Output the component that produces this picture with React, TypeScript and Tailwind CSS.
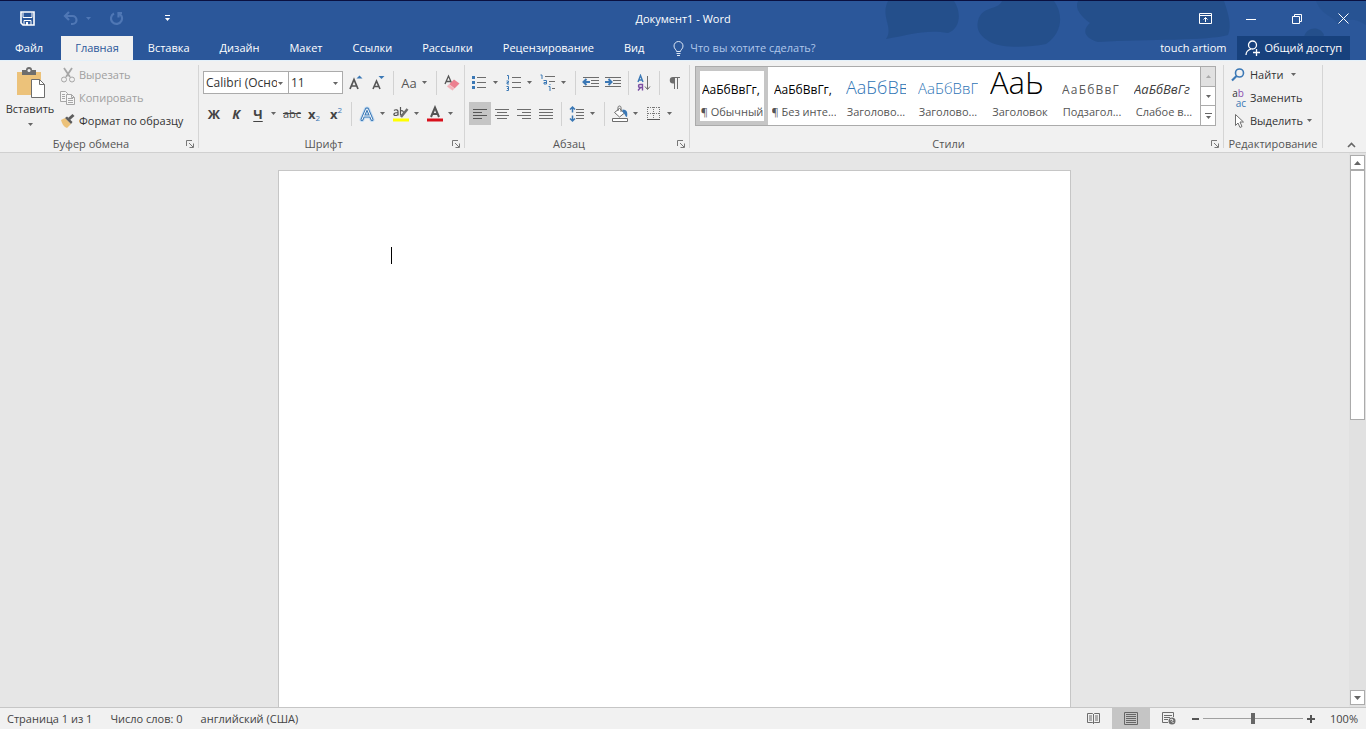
import React from 'react';
import { clsx } from 'clsx';

const TABS = ['Файл', 'Главная', 'Вставка', 'Дизайн', 'Макет', 'Ссылки', 'Рассылки', 'Рецензирование', 'Вид'];

const STYLES = [
  { name: '¶ Обычный', sample: 'АаБбВвГг,', className: 'text-[12px] text-black' },
  { name: '¶ Без инте...', sample: 'АаБбВвГг,', className: 'text-[12px] text-black' },
  { name: 'Заголово...', sample: 'АаБбВвГ', className: 'text-[18px] font-light text-[#2e74b5]' },
  { name: 'Заголово...', sample: 'АаБбВвГ', className: 'text-[15px] font-light text-[#2e74b5]' },
  { name: 'Заголовок', sample: 'АаЬ', className: 'text-[31px] font-light text-black' },
  { name: 'Подзагол...', sample: 'АаБбВвГ', className: 'text-[12px] tracking-widest text-[#5a5a5a]' },
  { name: 'Слабое в...', sample: 'АаБбВвГг', className: 'text-[13px] italic text-[#404040]' },
];

const Icon: React.FC<{ w?: number; h?: number; className?: string; children: React.ReactNode }> = ({
  w = 18,
  h = 18,
  className,
  children,
}) => (
  <svg width={w} height={h} viewBox={`0 0 ${w} ${h}`} fill="none" className={clsx('shrink-0', className)} aria-hidden="true">
    {children}
  </svg>
);

const Caret: React.FC<{ className?: string }> = ({ className }) => (
  <Icon w={5} h={3} className={className}>
    <path d="M0 0h5L2.5 3z" fill="currentColor" />
  </Icon>
);

const ToolButton: React.FC<{ label: string; active?: boolean; children: React.ReactNode }> = ({ label, active, children }) => (
  <button
    type="button"
    aria-label={label}
    title={label}
    className={clsx('flex h-[23px] w-[22px] shrink-0 items-center justify-center', active && 'bg-[#c5c5c5]')}
  >
    {children}
  </button>
);

const DropButton: React.FC<{ label: string }> = ({ label }) => (
  <button type="button" aria-label={label} className="flex h-[23px] w-3 shrink-0 items-center pl-[2px] text-[#666]">
    <Caret />
  </button>
);

const Divider = () => <div className="mx-1 h-6 w-px shrink-0 bg-[#d2d2d2]" />;

const Group: React.FC<{ title: string; launcher?: boolean; className?: string; children: React.ReactNode }> = ({
  title,
  launcher = true,
  className,
  children,
}) => (
  <section aria-label={title} className={clsx('flex flex-col', className)}>
    <div className="flex-1">{children}</div>
    <div className="flex h-4 items-center text-[#555]">
      <span className="flex-1 text-center">{title}</span>
      {launcher && (
        <button type="button" aria-label={`Параметры: ${title}`} className="flex w-4 justify-center">
          <Icon w={8} h={8}>
            <path d="M.5 6V.5H6M3 3l4 4M7.5 3.500v4h-4" stroke="#777" />
          </Icon>
        </button>
      )}
    </div>
  </section>
);

const GroupLine = () => <div className="my-1 w-px shrink-0 bg-[#d5d5d5]" />;

const TitleBar = () => (
  <div className="flex h-[35px] items-center">
    <div className="flex flex-1 items-center">
      <button type="button" aria-label="Сохранить" className="ml-5 mr-7">
        <Icon w={15} h={15}>
          <path d="M1 1h13v13H3l-2-2z" stroke="#fff" strokeWidth="1.6" />
          <path d="M3 1.500v5h9v-5" stroke="#fff" />
          <path d="M4 14V9.500h7V14" stroke="#fff" />
          <path d="M6 11h2v3H6z" fill="#fff" />
        </Icon>
      </button>
      <button type="button" aria-label="Отменить" className="mr-2">
        <Icon w={15} h={15}>
          <path d="M6 1L2 5l4 4M2 5h7.500a4 4 0 010 8H8" stroke="#4f77b5" strokeWidth="2.200" />
        </Icon>
      </button>
      <button type="button" aria-label="Список отмены" className="mr-[19px] text-[#4f77b5]">
        <Caret />
      </button>
      <button type="button" aria-label="Повторить" className="mr-10">
        <Icon w={14} h={15}>
          <path d="M4 2.500A5.500 5.500 0 107.500 2H12M8.500 1v5.500" stroke="#4f77b5" strokeWidth="2.200" />
        </Icon>
      </button>
      <button type="button" aria-label="Настройка панели быстрого доступа">
        <Icon w={7} h={7}>
          <path d="M1 .5h5" stroke="#fff" />
          <path d="M1 3h5L3.500 6z" fill="#fff" />
        </Icon>
      </button>
    </div>
    <h1>Документ1 - Word</h1>
    <div className="flex flex-1 justify-end">
      <button type="button" aria-label="Параметры отображения ленты" className="flex h-8 w-[46px] items-center justify-center">
        <Icon w={13} h={11}>
          <path d="M.5.5h12v10H.5zM.5 2.500h12M6.500 9V4.500M4.500 6.500l2-2 2 2" stroke="#fff" />
        </Icon>
      </button>
      <button type="button" aria-label="Свернуть" className="flex h-8 w-[46px] items-center justify-center">
        <Icon w={10} h={2}>
          <path d="M0 1.500h10" stroke="#fff" />
        </Icon>
      </button>
      <button type="button" aria-label="Свернуть в окно" className="flex h-8 w-[46px] items-center justify-center">
        <Icon w={10} h={10}>
          <path d="M.5 2.500h7v7h-7zM2.500 2.500v-2h7v7h-2" stroke="#fff" />
        </Icon>
      </button>
      <button type="button" aria-label="Закрыть" className="flex h-8 w-[46px] items-center justify-center">
        <Icon w={11} h={11}>
          <path d="M.5.5l10 10M10.500.5l-10 10" stroke="#fff" />
        </Icon>
      </button>
    </div>
  </div>
);

const TabRow = () => (
  <div className="flex h-6 items-stretch">
    <nav className="flex">
      {TABS.map(tab => (
        <button
          key={tab}
          type="button"
          className={clsx(
            tab === 'Главная' ? 'ml-[3px] bg-[#f1f1f1] px-[14px] text-[#2b579a]' : 'px-[15px]',
          )}
        >
          {tab}
        </button>
      ))}
    </nav>
    <label className="flex flex-1 items-center gap-[6px] pl-[14px]">
      <Icon w={11} h={15}>
        <path d="M3.500 10.500C3.500 8.500 1 8 1 5a4.500 4.500 0 019 0c0 3-2.500 3.500-2.500 5.500zM3.500 12.500h4M4 14.500h3" stroke="#dbe6f5" />
      </Icon>
      <input
        type="text"
        aria-label="Помощник"
        placeholder="Что вы хотите сделать?"
        className="flex-1 bg-transparent outline-none placeholder:text-[#b1c8ea]"
      />
    </label>
    <button type="button" className="px-[11px]">touch artiom</button>
    <button type="button" className="mr-4 flex items-center gap-1 bg-[#17417d] px-2">
      <Icon w={15} h={16}>
        <circle cx="7.500" cy="5" r="4" stroke="#fff" strokeWidth="1.300" />
        <path d="M1 15c0-3 2-5 5-6M8 12.500h7M11.500 9v7" stroke="#fff" strokeWidth="1.300" />
      </Icon>
      Общий доступ
    </button>
  </div>
);

const ClipboardGroup = () => (
  <Group title="Буфер обмена" className="w-[198px]">
    <div className="flex pt-[2px]">
      <button type="button" className="flex w-[60px] flex-col items-center pt-1">
        <Icon w={30} h={32}>
          <path d="M2 5h24v23H2z" fill="#ecc27a" />
          <path d="M7 3h4a3 3 0 016 0h4v5H7z" fill="#6d6d6d" />
          <circle cx="14" cy="3.500" r="1.500" fill="#f1f1f1" />
          <path d="M16.500 12.500h8l5 5v13h-13z" fill="#fff" stroke="#6d6d6d" />
          <path d="M24.500 12.500v5h5" stroke="#6d6d6d" />
        </Icon>
        <span className="mt-[2px]">Вставить</span>
        <Caret className="mt-[6px] text-[#666]" />
      </button>
      <div className="flex flex-col">
        <button type="button" className="flex h-[23px] items-center gap-[3px] text-[#a0a0a0]">
          <Icon w={16} h={16}>
            <path d="M4 1l6 9M12 1l-6 9" stroke="#a6a6a6" strokeWidth="1.800" />
            <circle cx="4" cy="12.500" r="2.500" stroke="#a6a6a6" />
            <circle cx="12" cy="12.500" r="2.500" stroke="#a6a6a6" />
          </Icon>
          Вырезать
        </button>
        <button type="button" className="flex h-[23px] items-center gap-[3px] text-[#a0a0a0]">
          <Icon w={16} h={16}>
            <path d="M.5 1.500h5l2 2v8h-7z" fill="#f6f6f6" stroke="#a6a6a6" />
            <path d="M6.500 4.500h5l3 3v7h-8z" fill="#f6f6f6" stroke="#a6a6a6" />
            <path d="M2 4.500h3M2 6.500h3M2 8.500h3M8 8.500h5M8 10.500h5M8 12.500h5M11.500 4.500v3h3" stroke="#a6a6a6" />
          </Icon>
          Копировать
        </button>
        <button type="button" className="flex h-[23px] items-center gap-[3px]">
          <Icon w={16} h={16}>
            <path d="M1 7l4-2 6 6-4 4c-3-1-5-4-6-8z" fill="#ecc27a" />
            <path d="M5 5l2-1.500 5.500 5.500L11 11z" fill="#5c5c5c" />
            <path d="M9 6l4.500-4" stroke="#5c5c5c" strokeWidth="3" />
          </Icon>
          Формат по образцу
        </button>
      </div>
    </div>
  </Group>
);

const FontGroup = () => (
  <Group title="Шрифт" className="w-[265px]">
    <div className="flex flex-col gap-2 pl-1 pt-[10px]">
      <div className="flex h-[23px] items-center">
        <div className="relative h-[23px] w-[86px] border border-[#ababab] bg-white">
          <select aria-label="Шрифт" className="h-full w-full appearance-none overflow-hidden pl-[2px] pr-[11px] text-[12px] outline-none">
            <option>Calibri (Основной текст)</option>
          </select>
          <Caret className="pointer-events-none absolute right-[5px] top-[10px] text-[#666]" />
        </div>
        <div className="relative -ml-px h-[23px] w-[55px] border border-[#ababab] bg-white">
          <select aria-label="Размер шрифта" className="h-full w-full appearance-none pl-[2px] text-[12px] outline-none">
            <option>11</option>
          </select>
          <Caret className="pointer-events-none absolute right-[4px] top-[10px] text-[#666]" />
        </div>
        <div className="ml-[2px] flex items-center">
          <ToolButton label="Увеличить размер шрифта">
            <Icon>
              <path d="M3 15L7 5.500 11 15M4.500 12h5" stroke="#555" strokeWidth="1.700" />
              <path d="M9.500 4.500h6l-3-3z" fill="#3b78b5" />
            </Icon>
          </ToolButton>
          <ToolButton label="Уменьшить размер шрифта">
            <Icon>
              <path d="M4 15L7.500 7 11 15M5.500 12.500h4" stroke="#555" strokeWidth="1.600" />
              <path d="M9.500 2h6l-3 3z" fill="#3b78b5" />
            </Icon>
          </ToolButton>
          <Divider />
          <ToolButton label="Регистр">
            <span className="text-[13px] text-[#555]">Aa</span>
          </ToolButton>
          <DropButton label="Варианты регистра" />
          <Divider />
          <ToolButton label="Удалить все форматирование">
            <Icon>
              <path d="M2 10L5.500 2 9 10M3.500 7.500h4" stroke="#555" strokeWidth="1.300" />
              <path d="M4 12.500l7-7 5.500 4-7 7z" fill="#ec8090" />
              <path d="M4 12.500l2-2 5.500 4-2 2z" fill="#f4b0b8" stroke="#f1f1f1" strokeWidth=".5" />
            </Icon>
          </ToolButton>
        </div>
      </div>
      <div className="flex h-[23px] items-center text-[13px] text-[#444]">
        <ToolButton label="Полужирный"><b>Ж</b></ToolButton>
        <ToolButton label="Курсив"><b className="italic">К</b></ToolButton>
        <ToolButton label="Подчеркнутый"><b className="underline underline-offset-2">Ч</b></ToolButton>
        <DropButton label="Вид подчеркивания" />
        <ToolButton label="Зачеркнутый"><span className="text-[11px] line-through">abc</span></ToolButton>
        <ToolButton label="Подстрочный знак">
          <b>x</b><span className="pt-2 text-[8px] text-[#3b78b5]">2</span>
        </ToolButton>
        <ToolButton label="Надстрочный знак">
          <b>x</b><span className="pb-2 text-[8px] text-[#3b78b5]">2</span>
        </ToolButton>
        <Divider />
        <ToolButton label="Текстовые эффекты">
          <Icon>
            <g strokeLinejoin="round" strokeLinecap="round">
              <path d="M4 14.500L8.500 4h1L14 14.500M6 11h6" stroke="#c3dcf3" strokeWidth="5" />
              <path d="M4 14.500L8.500 4h1L14 14.500M6 11h6" stroke="#3b78b5" strokeWidth="3" />
              <path d="M4 14.500L8.500 4h1L14 14.500M6 11h6" stroke="#fff" strokeWidth="1" />
            </g>
          </Icon>
        </ToolButton>
        <DropButton label="Варианты эффектов" />
        <ToolButton label="Цвет выделения текста">
          <Icon>
            <path d="M1 13.500h16v3H1z" fill="#ff0" />
            <path d="M2 5.500c2-1.500 4-.5 4 1v4M6 7.500c-5 0-5 3-2.500 3 1.500 0 2.500-1 2.500-1.500M8.500 2v8.500M8.500 6c4-2 4 5 0 4" stroke="#555" strokeWidth="1.200" />
            <path d="M9 12l6.500-8" stroke="#6d6d6d" strokeWidth="2.500" />
          </Icon>
        </ToolButton>
        <DropButton label="Выбор цвета выделения" />
        <ToolButton label="Цвет текста">
          <Icon>
            <path d="M1 13.500h16v3H1z" fill="#d8101c" />
            <path d="M5 12L9 2.500 13 12M6.500 9h5" stroke="#555" strokeWidth="2" />
          </Icon>
        </ToolButton>
        <DropButton label="Выбор цвета текста" />
      </div>
    </div>
  </Group>
);

const ParagraphGroup = () => (
  <Group title="Абзац" className="w-[224px]">
    <div className="flex flex-col gap-2 pl-1 pt-[10px]">
      <div className="flex h-[23px] items-center">
        <ToolButton label="Маркеры">
          <Icon>
            <path d="M6 3.500h9M6 8.500h9M6 13.500h9" stroke="#6d6d6d" />
            <path d="M1 2h3v3H1zM1 7h3v3H1zM1 12h3v3H1z" fill="#3b78b5" />
          </Icon>
        </ToolButton>
        <DropButton label="Библиотека маркеров" />
        <ToolButton label="Нумерация">
          <Icon>
            <path d="M7 3.500h9M7 8.500h9M7 13.500h9" stroke="#6d6d6d" />
            <path d="M2 1.500h1.500v4M1.500 7h2v1.500h-1.500v1.500h2M1.500 12.500h2v4h-2M2 14.500h1.500" stroke="#3b78b5" />
          </Icon>
        </ToolButton>
        <DropButton label="Библиотека нумерации" />
        <ToolButton label="Многоуровневый список">
          <Icon>
            <path d="M6 2.500h10M10 7.500h6M13 14.500h3" stroke="#6d6d6d" />
            <path d="M1.500 1H3v4M4.500 6.500h3v3.500H5V8.500h2.500M9.500 12.500H11V17M10.500 10.500h1" stroke="#3b78b5" />
          </Icon>
        </ToolButton>
        <DropButton label="Библиотека списков" />
        <Divider />
        <ToolButton label="Уменьшить отступ">
          <Icon>
            <path d="M1 3.500h16M9 6.500h8M9 9.500h8M1 12.500h16" stroke="#6d6d6d" />
            <path d="M8 8H2M4.500 5L1.500 8l3 3" stroke="#3b78b5" strokeWidth="2" />
          </Icon>
        </ToolButton>
        <ToolButton label="Увеличить отступ">
          <Icon>
            <path d="M1 3.500h16M9 6.500h8M9 9.500h8M1 12.500h16" stroke="#6d6d6d" />
            <path d="M1 8h6M4.500 5l3 3-3 3" stroke="#3b78b5" strokeWidth="2" />
          </Icon>
        </ToolButton>
        <Divider />
        <ToolButton label="Сортировка">
          <Icon w={16}>
            <path d="M2 8l2.500-6.500L7 8M3 6h3" stroke="#3b78b5" strokeWidth="1.400" />
            <path d="M6.500 16.500v-6H4c-2 0-2 3 0 3h2.500M4.500 13.500l-2.500 3" stroke="#7b4fa3" strokeWidth="1.400" />
            <path d="M11.500 2v13M9 12.500l2.500 3 2.500-3" stroke="#6d6d6d" />
          </Icon>
        </ToolButton>
        <Divider />
        <ToolButton label="Отобразить все знаки">
          <Icon w={12} h={14}>
            <path d="M5.500 1v12M8.500 1v12M4 1.500h7" stroke="#6d6d6d" />
            <path d="M5.500 1H4a3.200 3.200 0 000 6.500h1.500z" fill="#6d6d6d" />
          </Icon>
        </ToolButton>
      </div>
      <div className="flex h-[23px] items-center">
        <ToolButton label="По левому краю" active>
          <Icon><path d="M2 4.500h14M2 7.500h9M2 10.500h14M2 13.500h9" stroke="#555" /></Icon>
        </ToolButton>
        <ToolButton label="По центру">
          <Icon><path d="M2 4.500h14M4 7.500h10M2 10.500h14M4 13.500h10" stroke="#6d6d6d" /></Icon>
        </ToolButton>
        <ToolButton label="По правому краю">
          <Icon><path d="M2 4.500h14M7 7.500h9M2 10.500h14M7 13.500h9" stroke="#6d6d6d" /></Icon>
        </ToolButton>
        <ToolButton label="По ширине">
          <Icon><path d="M2 4.500h14M2 7.500h14M2 10.500h14M2 13.500h14" stroke="#6d6d6d" /></Icon>
        </ToolButton>
        <Divider />
        <ToolButton label="Интервал">
          <Icon w={16}>
            <path d="M7 4.500h8M7 7.500h8M7 10.500h8M7 13.500h8" stroke="#6d6d6d" />
            <path d="M3.500 2v5.500M1 4.500L3.500 2 6 4.500M3.500 10.500V16M1 13.500L3.500 16 6 13.500" stroke="#3b78b5" strokeWidth="1.500" />
          </Icon>
        </ToolButton>
        <DropButton label="Варианты интервала" />
        <Divider />
        <ToolButton label="Заливка">
          <Icon>
            <path d="M1.500 13.500h15v3h-15z" fill="#fff" stroke="#6d6d6d" />
            <path d="M3.500 7.500l5-4 5 4.500-5 4z" fill="#fff" stroke="#6d6d6d" />
            <path d="M7 6V2.500c0-2 3-2 3 0V7" stroke="#6d6d6d" />
            <path d="M11.500 4.500c4.500 0 5.500 3 4.500 7.500-2 0-1.500-3-4.500-5z" fill="#3b78b5" />
          </Icon>
        </ToolButton>
        <DropButton label="Выбор заливки" />
        <ToolButton label="Границы">
          <Icon w={14} h={14}>
            <path d="M1 .5h12M1 6.500h12M.5 0v12M6.500 0v12M12.500 0v12" stroke="#777" strokeDasharray="1 1" />
            <path d="M0 12.500h13" stroke="#555" />
          </Icon>
        </ToolButton>
        <DropButton label="Выбор границ" />
      </div>
    </div>
  </Group>
);

const StylesGroup = () => (
  <Group title="Стили" className="flex-1">
    <div className="pl-[5px] pr-[7px] pt-[5px]">
      <div className="flex h-[60px] border border-[#ababab] bg-white">
        <div className="grid flex-1 grid-cols-7">
          {STYLES.map((style, i) => (
            <button
              key={i}
              type="button"
              className={clsx('flex flex-col overflow-hidden border-4', i === 0 ? 'border-[#c6c6c6]' : 'border-transparent')}
            >
              {/* the empty box sets one baseline for samples of every size */}
              <span
                className={clsx(
                  "mx-[2px] flex h-[34px] items-baseline self-stretch overflow-hidden whitespace-nowrap leading-[22px] before:h-[23px] before:w-0 before:content-['']",
                  style.className,
                )}
              >
                {style.sample}
              </span>
              <span className="self-center whitespace-nowrap leading-[14px] text-[#555]">{style.name}</span>
            </button>
          ))}
        </div>
        <div className="flex w-[15px] flex-col divide-y divide-[#ababab] border-l border-[#ababab] text-[#666]">
          <button type="button" aria-label="Предыдущая строка" className="flex flex-1 items-center justify-center bg-[#e1e1e1] text-[#aaa]">
            <Caret className="rotate-180" />
          </button>
          <button type="button" aria-label="Следующая строка" className="flex flex-1 items-center justify-center">
            <Caret />
          </button>
          <button type="button" aria-label="Дополнительные параметры" className="flex flex-1 items-center justify-center">
            <Icon w={7} h={6}>
              <path d="M0 .5h7" stroke="currentColor" />
              <path d="M1 3h5L3.500 6z" fill="currentColor" />
            </Icon>
          </button>
        </div>
      </div>
    </div>
  </Group>
);

const EditingGroup = () => (
  <Group title="Редактирование" launcher={false} className="w-[98px]">
    <div className="flex flex-col pl-[6px] pt-[2px]">
      <button type="button" className="flex h-[23px] items-center gap-1">
        <Icon w={16} h={16}>
          <circle cx="9.500" cy="6" r="4" stroke="#3b78b5" strokeWidth="1.600" />
          <path d="M6.500 9L2 13.500" stroke="#3b78b5" strokeWidth="2.200" />
        </Icon>
        Найти
        <Caret className="ml-1 text-[#666]" />
      </button>
      <button type="button" className="flex h-[23px] items-center gap-1">
        <span className="flex w-4 flex-col text-[10px] leading-[10px]">
          <span>a<span className="text-[#8a4fb0]">b</span></span>
          <span className="self-end text-[#3b78b5]">ac</span>
        </span>
        Заменить
      </button>
      <button type="button" className="flex h-[23px] items-center gap-1">
        <Icon w={16} h={16}>
          <path d="M5.500 1.500v11l2.500-2.500 2 4.500 2-1-2-4.500h3.500z" fill="#fff" stroke="#6d6d6d" />
        </Icon>
        Выделить
        <Caret className="text-[#666]" />
      </button>
    </div>
  </Group>
);

const ScrollBar = () => (
  <div className="flex w-[17px] flex-col items-center bg-[#e1e1e1] py-[2px]">
    <button type="button" aria-label="Вверх" className="flex h-[15px] w-[15px] items-center justify-center border border-[#ababab] bg-white">
      <Icon w={7} h={4}><path d="M0 4h7L3.500 0z" fill="#666" /></Icon>
    </button>
    <div className="w-[15px] flex-1">
      <div className="h-[48%] border border-[#ababab] bg-white" />
    </div>
    <button type="button" aria-label="Вниз" className="flex h-[15px] w-[15px] items-center justify-center border border-[#ababab] bg-white">
      <Icon w={7} h={4}><path d="M0 0h7L3.500 4z" fill="#666" /></Icon>
    </button>
  </div>
);

const StatusBar = () => (
  <footer className="flex h-[22px] shrink-0 items-stretch border-t border-[#c6c6c6] bg-[#f1f1f1] text-[#444]">
    <div className="flex flex-1 items-center gap-[18px] pl-[7px]">
      <button type="button">Страница 1 из 1</button>
      <button type="button">Число слов: 0</button>
      <button type="button">английский (США)</button>
    </div>
    <button type="button" aria-label="Режим чтения" className="flex w-[38px] items-center justify-center">
      <Icon w={13} h={13}>
        <path d="M.5 1.500h5l1 1 1-1h5v9h-5l-1 1-1-1h-5zM6.500 2v10M2 4h3M2 6h3M2 8h3M8 4h3M8 6h3M8 8h3" stroke="#6d6d6d" />
      </Icon>
    </button>
    <button type="button" aria-label="Разметка страницы" className="flex w-[38px] items-center justify-center bg-[#c5c5c5]">
      <Icon w={14} h={13}>
        <path d="M.5.5h13v12H.5zM2 2.500h10M2 4.500h10M2 6.500h10M2 8.500h10M2 10.500h10" stroke="#666" />
      </Icon>
    </button>
    <button type="button" aria-label="Веб-документ" className="flex w-[38px] items-center justify-center">
      <Icon w={14} h={13}>
        <path d="M6 10.500H.5V.5h11V5M2 3.500h8M2 5.500h6M2 7.500h4" stroke="#6d6d6d" />
        <circle cx="10" cy="9" r="3.500" fill="#6d6d6d" />
        <path d="M8 8l2-1 1 1.500-1.500 1M10.500 11l1-1" stroke="#f1f1f1" />
      </Icon>
    </button>
    <div className="flex items-center pl-1">
      <button type="button" aria-label="Уменьшить масштаб">
        <Icon w={7} h={8}><path d="M0 4h7" stroke="#555" strokeWidth="2" /></Icon>
      </button>
      <input
        type="range"
        min={0}
        max={100}
        defaultValue={50}
        aria-label="Масштаб"
        className="mx-1 h-[11px] w-[100px] appearance-none bg-transparent bg-[linear-gradient(#a0a0a0,#a0a0a0)] bg-[length:100%_1px] bg-center bg-no-repeat [&::-webkit-slider-thumb]:h-[11px] [&::-webkit-slider-thumb]:w-1 [&::-webkit-slider-thumb]:appearance-none [&::-webkit-slider-thumb]:bg-[#666]"
      />
      <button type="button" aria-label="Увеличить масштаб">
        <Icon w={8} h={8}><path d="M0 4h8M4 0v8" stroke="#555" strokeWidth="2" /></Icon>
      </button>
      <button type="button" className="w-[51px] pr-2 text-right">100%</button>
    </div>
  </footer>
);

export default function App() {
  return (
    <div className="flex h-screen flex-col overflow-hidden font-['Open_Sans','Noto_Sans',sans-serif] text-[11px] leading-4 text-[#333]">
      <header className="relative border-t border-[#0a1040] bg-[#2b579a] text-white">
        {/* Dark cloud pattern behind the window buttons */}
        <svg className="absolute right-0 top-0 h-full w-[500px]" viewBox="0 0 500 59" aria-hidden="true">
          <g fill="#204a82" opacity=".6">
            <path d="M22 0h66c8 12 6 28-6 32-22-4-40 2-62 6 8-12-6-22 2-38z" />
            <path d="M112 20c4-16 20-10 24-20h52c10 14 8 32-8 43-20 4-44 4-56-2-10-6-14-12-12-21z" />
            <path d="M212 0h146c4 12 8 24 4 34-20 6-80 4-130 7-14-4-16-12-8-19-8-6-16-14-12-22z" />
            <path d="M438 36c2-10 16-12 20-2l-4 6h-16z" />
            <path d="M450 0h50v24c-12-8-20-6-28 0-4-10-16-8-22-24z" opacity=".4" />
          </g>
        </svg>
        <div className="relative">
          <TitleBar />
          <TabRow />
        </div>
      </header>

      <div className="flex h-[93px] shrink-0 border-b border-t border-b-[#d0d0d0] border-t-[#e4f1fa] bg-[#f1f1f1]">
        <ClipboardGroup />
        <GroupLine />
        <FontGroup />
        <GroupLine />
        <ParagraphGroup />
        <GroupLine />
        <StylesGroup />
        <GroupLine />
        <EditingGroup />
        <GroupLine />
        <div className="flex w-[43px] items-end justify-end pb-1 pr-[10px]">
          <button type="button" aria-label="Свернуть ленту">
            <Icon w={9} h={6}><path d="M1 5l3.500-3.500L8 5" stroke="#666" strokeWidth="1.600" /></Icon>
          </button>
        </div>
      </div>

      <main className="flex min-h-0 flex-1 bg-[#e6e6e6]">
        <div className="flex flex-1 justify-center overflow-hidden pt-[17px]">
          <div className="w-[793px] border border-b-0 border-[#c6c6c6] bg-white pl-28 pt-[76px]">
            <div className="h-[17px] w-px bg-black" />
          </div>
        </div>
        <ScrollBar />
      </main>

      <StatusBar />
    </div>
  );
}
